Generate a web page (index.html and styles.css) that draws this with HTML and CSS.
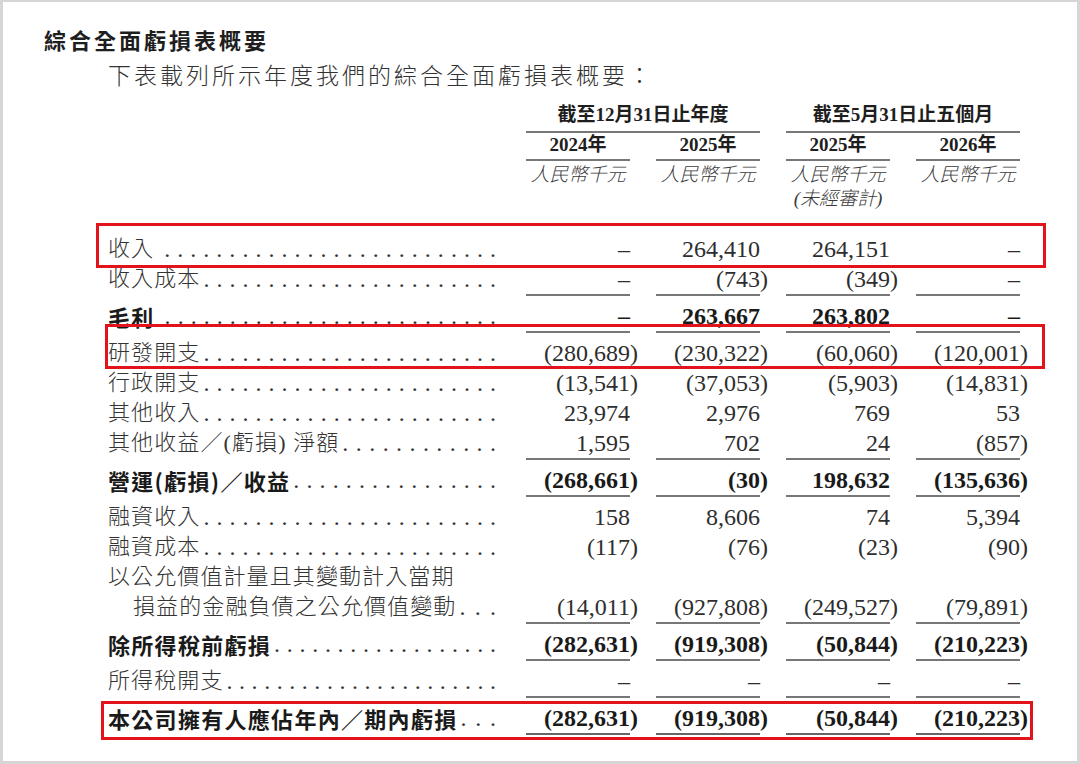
FILE: index.html
```html
<!DOCTYPE html>
<html lang="zh-Hant">
<head>
<meta charset="utf-8">
<title>綜合全面虧損表概要</title>
<link rel="stylesheet" href="styles.css">
</head>
<body>
<div class="page">
  <h1 class="title">綜合全面虧損表概要</h1>
  <p class="intro">下表載列所示年度我們的綜合全面虧損表概要：</p>

  <div class="table">
    <div class="row head1">
      <div class="lbl"></div>
      <div class="grp">截至12月31日止年度</div>
      <div class="grp">截至5月31日止五個月</div>
    </div>
    <div class="row head2">
      <div class="lbl"></div>
      <div class="yr">2024年</div>
      <div class="yr">2025年</div>
      <div class="yr">2025年</div>
      <div class="yr">2026年</div>
    </div>
    <div class="row head3">
      <div class="lbl"></div>
      <div class="cur">人民幣千元</div>
      <div class="cur">人民幣千元</div>
      <div class="cur">人民幣千元<br>(未經審計)</div>
      <div class="cur">人民幣千元</div>
    </div>

    <div class="row data first hl hl1">
      <div class="lbl sp"><span class="txt">收入</span><span class="dots">. . . . .  . . . . .  . . . . .  . . . . .  . . . . .  .</span></div>
      <div class="num">–</div>
      <div class="num">264,410</div>
      <div class="num">264,151</div>
      <div class="num">–</div>
    </div>
    <div class="row data ruled">
      <div class="lbl"><span class="txt">收入成本</span><span class="dots">. . . . .  . . . . .  . . . . .  . . . . .  . . .</span></div>
      <div class="num">–</div>
      <div class="num">(743<span class="cp">)</span></div>
      <div class="num">(349<span class="cp">)</span></div>
      <div class="num">–</div>
    </div>
    <div class="row data ruled bold">
      <div class="lbl sp"><span class="txt">毛利</span><span class="dots">. . . . .  . . . . .  . . . . .  . . . . .  . . . . .  .</span></div>
      <div class="num">–</div>
      <div class="num">263,667</div>
      <div class="num">263,802</div>
      <div class="num">–</div>
    </div>
    <div class="row data hl hl2">
      <div class="lbl"><span class="txt">研發開支</span><span class="dots">. . . . .  . . . . .  . . . . .  . . . . .  . . .</span></div>
      <div class="num">(280,689<span class="cp">)</span></div>
      <div class="num">(230,322<span class="cp">)</span></div>
      <div class="num">(60,060<span class="cp">)</span></div>
      <div class="num">(120,001<span class="cp">)</span></div>
    </div>
    <div class="row data">
      <div class="lbl"><span class="txt">行政開支</span><span class="dots">. . . . .  . . . . .  . . . . .  . . . . .  . . .</span></div>
      <div class="num">(13,541<span class="cp">)</span></div>
      <div class="num">(37,053<span class="cp">)</span></div>
      <div class="num">(5,903<span class="cp">)</span></div>
      <div class="num">(14,831<span class="cp">)</span></div>
    </div>
    <div class="row data">
      <div class="lbl"><span class="txt">其他收入</span><span class="dots">. . . . .  . . . . .  . . . . .  . . . . .  . . .</span></div>
      <div class="num">23,974</div>
      <div class="num">2,976</div>
      <div class="num">769</div>
      <div class="num">53</div>
    </div>
    <div class="row data ruled">
      <div class="lbl"><span class="txt">其他收益／(虧損) 淨額</span><span class="dots">. . . . .  . . . . .  . .</span></div>
      <div class="num">1,595</div>
      <div class="num">702</div>
      <div class="num">24</div>
      <div class="num">(857<span class="cp">)</span></div>
    </div>
    <div class="row data ruled bold">
      <div class="lbl"><span class="txt">營運(虧損)／收益</span><span class="dots">. . . . .  . . . . .  . . . . .  .</span></div>
      <div class="num">(268,661<span class="cp">)</span></div>
      <div class="num">(30<span class="cp">)</span></div>
      <div class="num">198,632</div>
      <div class="num">(135,636<span class="cp">)</span></div>
    </div>
    <div class="row data">
      <div class="lbl"><span class="txt">融資收入</span><span class="dots">. . . . .  . . . . .  . . . . .  . . . . .  . . .</span></div>
      <div class="num">158</div>
      <div class="num">8,606</div>
      <div class="num">74</div>
      <div class="num">5,394</div>
    </div>
    <div class="row data">
      <div class="lbl"><span class="txt">融資成本</span><span class="dots">. . . . .  . . . . .  . . . . .  . . . . .  . . .</span></div>
      <div class="num">(117<span class="cp">)</span></div>
      <div class="num">(76<span class="cp">)</span></div>
      <div class="num">(23<span class="cp">)</span></div>
      <div class="num">(90<span class="cp">)</span></div>
    </div>
    <div class="row data">
      <div class="lbl"><span class="txt">以公允價值計量且其變動計入當期</span></div>
      <div class="num"></div>
      <div class="num"></div>
      <div class="num"></div>
      <div class="num"></div>
    </div>
    <div class="row data ruled">
      <div class="lbl indent"><span class="txt">損益的金融負債之公允價值變動</span><span class="dots">. . .</span></div>
      <div class="num">(14,011<span class="cp">)</span></div>
      <div class="num">(927,808<span class="cp">)</span></div>
      <div class="num">(249,527<span class="cp">)</span></div>
      <div class="num">(79,891<span class="cp">)</span></div>
    </div>
    <div class="row data ruled bold">
      <div class="lbl"><span class="txt">除所得稅前虧損</span><span class="dots">. . . . .  . . . . .  . . . . .  . . .</span></div>
      <div class="num">(282,631<span class="cp">)</span></div>
      <div class="num">(919,308<span class="cp">)</span></div>
      <div class="num">(50,844<span class="cp">)</span></div>
      <div class="num">(210,223<span class="cp">)</span></div>
    </div>
    <div class="row data ruled">
      <div class="lbl"><span class="txt">所得稅開支</span><span class="dots">. . . . .  . . . . .  . . . . .  . . . . .  . .</span></div>
      <div class="num">–</div>
      <div class="num">–</div>
      <div class="num">–</div>
      <div class="num">–</div>
    </div>
    <div class="row data total bold hl hl3">
      <div class="lbl"><span class="txt">本公司擁有人應佔年內／期內虧損</span><span class="dots">. . .</span></div>
      <div class="num">(282,631<span class="cp">)</span></div>
      <div class="num">(919,308<span class="cp">)</span></div>
      <div class="num">(50,844<span class="cp">)</span></div>
      <div class="num">(210,223<span class="cp">)</span></div>
    </div>
  </div>
</div>
</body>
</html>
```

FILE: styles.css
```css
html, body {
  margin: 0;
  padding: 0;
  background: #ffffff;
}

.page {
  width: 1080px;
  height: 764px;
  box-sizing: border-box;
  border-style: solid;
  border-color: #d6d6d6;
  border-width: 2px 3px 3px 3px;
  background: #ffffff;
  overflow: hidden;
  color: #2a2a2a;
}

.title {
  margin: 22px 0 0 41px;
  font-family: "Noto Sans CJK TC", "Noto Sans CJK SC", sans-serif;
  font-weight: 700;
  font-size: 22px;
  line-height: 30px;
  letter-spacing: 3px;
  color: #1e1e1e;
}

.intro {
  margin: 8px 0 0 105px;
  font-family: "Liberation Serif", "Noto Sans CJK TC", serif;
  font-weight: 300;
  font-size: 23px;
  line-height: 30px;
  letter-spacing: 3px;
  color: #333333;
}

.table {
  margin: 11px 0 0 105px;
}

.row {
  display: grid;
  grid-template-columns: 392px repeat(4, 104px);
  column-gap: 26px;
  width: 912px;
  position: relative;
}

/* header rows */
.head1,
.head2 {
  font-family: "Liberation Serif", "Noto Sans CJK TC", serif;
  font-weight: 700;
  font-size: 19px;
  line-height: 24px;
  color: #1e1e1e;
}
.grp {
  grid-column: span 2;
  text-align: center;
  padding-bottom: 4px;
  border-bottom: 2px solid #777777;
}
.yr {
  text-align: center;
  padding-bottom: 2px;
  border-bottom: 2px solid #777777;
}
.head3 {
  font-family: "Liberation Serif", "Noto Sans CJK TC", serif;
  font-style: italic;
  font-weight: 300;
  font-size: 19px;
  line-height: 24px;
  color: #3a3a3a;
  padding-top: 2px;
}
.cur {
  text-align: center;
}

/* data rows */
.data {
  font-family: "Liberation Serif", "Noto Sans CJK TC", serif;
  font-size: 24px;
  line-height: 30px;
  color: #2e2e2e;
}
.data.first {
  margin-top: 23px;
}
.lbl {
  display: flex;
  align-items: flex-start;
  min-width: 0;
}
.txt {
  font-size: 22px;
  letter-spacing: 1.1px;
  white-space: nowrap;
  font-weight: 300;
  color: #333333;
}
.indent {
  padding-left: 25px;
}
.dots {
  flex: 1;
  min-width: 0;
  height: 30px;
  margin-left: 3px;
  margin-right: 4px;
  text-align: justify;
  text-align-last: justify;
  color: #333333;
  font-weight: 400;
}
.sp .dots {
  margin-left: 10px;
}
.num {
  text-align: right;
  white-space: nowrap;
}
.cp {
  margin-right: -0.333em;
}

.ruled {
  margin-bottom: 5px;
}
.ruled .num {
  border-bottom: 2px solid #777777;
}
.total .num {
  border-bottom: 6px double #666666;
}

.bold .txt {
  font-family: "Noto Sans CJK TC", sans-serif;
  font-weight: 700;
  color: #1a1a1a;
  letter-spacing: 1.3px;
}
.bold .num {
  font-weight: 700;
  color: #1a1a1a;
}

/* highlight boxes laid over the rows */
.hl::after {
  content: "";
  position: absolute;
  border: 3px solid #e3131c;
  pointer-events: none;
}
.hl1::after {
  left: -12px;
  right: -26px;
  top: -11px;
  bottom: -4px;
}
.hl2::after {
  left: -3px;
  right: -25px;
  top: -14px;
  bottom: -1px;
}
.hl3::after {
  left: -7px;
  right: -13px;
  top: -2px;
  bottom: -1px;
}
```
